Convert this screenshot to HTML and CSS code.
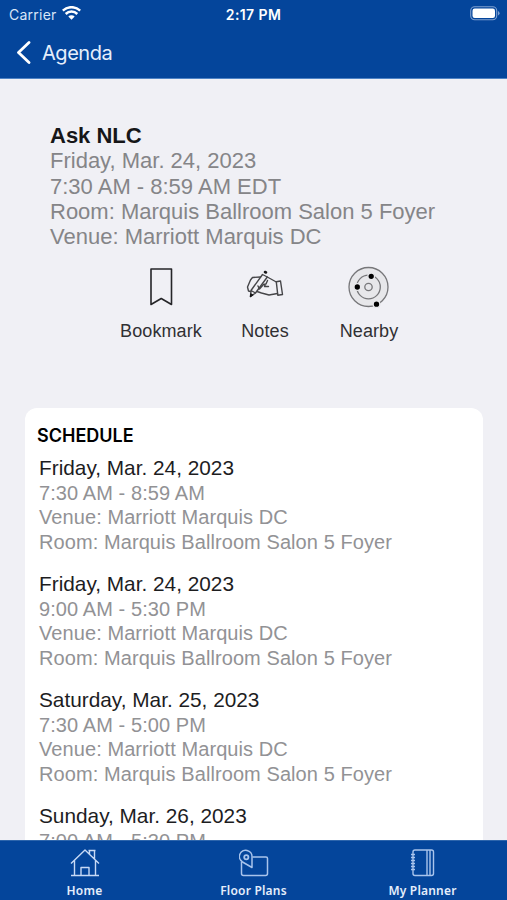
FILE: index.html
```html
<!DOCTYPE html>
<html lang="en">
<head>
<meta charset="utf-8">
<title>Agenda</title>
<link rel="stylesheet" href="styles.css">
</head>
<body>
<div class="app">
  <header class="top">
    <div class="status">
      <div class="carrier"><span>Carrier</span>
        <svg width="19" height="14" viewBox="0 0 19 14" fill="none" stroke="#fff" stroke-width="2.5"><path d="M.8 4.700a12.500 12.500 0 0 1 17.400 0M3.700 8a8.200 8.200 0 0 1 11.600 0"/><path d="M6.300 10.600a4.500 4.500 0 0 1 6.400 0l-3.200 3.200z" fill="#fff" stroke="none"/></svg>
      </div>
      <div class="clock">2:17 PM</div>
      <div class="battery">
        <svg width="31" height="15" viewBox="0 0 31 15"><rect x="1.700" y=".7" width="26" height="13" rx="4" fill="none" stroke="#7fa0d0" stroke-width="1.1"/><rect x="3.500" y="2.500" width="22.500" height="9.500" rx="2.200" fill="#fff"/><path d="M29 5v4.500q1.600-.8 1.600-2.200T29 5z" fill="#7fa0d0"/></svg>
      </div>
    </div>
    <nav class="back">
      <svg width="15" height="24" viewBox="0 0 15 24" fill="none" stroke="#fff" stroke-width="2.800" stroke-linecap="round" stroke-linejoin="round"><path d="M13 1.500 2.500 11.500 13 21.500"/></svg>
      <span>Agenda</span>
    </nav>
  </header>
  <main class="content">
    <section class="event">
      <h1>Ask NLC</h1>
      <p>Friday, Mar. 24, 2023</p>
      <p>7:30 AM - 8:59 AM EDT</p>
      <p>Room: Marquis Ballroom Salon 5 Foyer</p>
      <p>Venue: Marriott Marquis DC</p>
    </section>
    <div class="actions">
      <div class="action">
        <svg width="44" height="44" viewBox="0 0 44 44" fill="none" stroke="#252528" stroke-width="1.600" stroke-linejoin="round"><path d="M12 5h20.500v35.500l-10.250-6-10.250 6z"/></svg>
        <span>Bookmark</span>
      </div>
      <div class="action">
        <svg width="44" height="44" viewBox="0 0 44 44" fill="none" stroke="#454548" stroke-width="1.400" stroke-linejoin="round" stroke-linecap="round"><path d="m19.500 10.500 4.800 2.500L12.500 29l-4.500-2.500zM8 26.500l-.5 6 5-3.500"/><path d="M17.500 13 9.500 13.500 7.500 16l-3 7 1 4 2 .5M24.300 13l9 5M15 22l1.500 3 4-4.500 2.500-.5 1.500-3.500M22.500 20l-1 2.500h4M14 27.500l4.500 1.500 7.500 2 8.500-1.500"/><path d="m33.300 17.800 4.200-.8 2 13.500-4.700.7z"/><path d="m22 8 1 .5" stroke="#171719" stroke-width="2.600"/><path d="m7.500 32.500.4-2.500 1.800 1z" fill="#171719" stroke="#171719"/></svg>
        <span>Notes</span>
      </div>
      <div class="action">
        <svg width="44" height="44" viewBox="0 0 44 44" fill="none" stroke="#77777a" stroke-width="1.300"><circle cx="21.500" cy="23" r="19.500" fill="#e7e7ea"/><circle cx="21.500" cy="23" r="11.800"/><circle cx="21.500" cy="23" r="3.700"/><g fill="#000" stroke="#e7e7ea"><circle cx="24.200" cy="12.300" r="3.300"/><circle cx="10.300" cy="23" r="3.300"/><circle cx="29.500" cy="40.200" r="3.300"/></g></svg>
        <span>Nearby</span>
      </div>
    </div>
    <section class="card">
      <h2>SCHEDULE</h2>
      <div class="slot"><h3>Friday, Mar. 24, 2023</h3><p>7:30 AM - 8:59 AM</p><p>Venue: Marriott Marquis DC</p><p>Room: Marquis Ballroom Salon 5 Foyer</p></div>
      <div class="slot"><h3>Friday, Mar. 24, 2023</h3><p>9:00 AM - 5:30 PM</p><p>Venue: Marriott Marquis DC</p><p>Room: Marquis Ballroom Salon 5 Foyer</p></div>
      <div class="slot"><h3>Saturday, Mar. 25, 2023</h3><p>7:30 AM - 5:00 PM</p><p>Venue: Marriott Marquis DC</p><p>Room: Marquis Ballroom Salon 5 Foyer</p></div>
      <div class="slot"><h3>Sunday, Mar. 26, 2023</h3><p>7:00 AM - 5:30 PM</p></div>
    </section>
  </main>
  <nav class="tabs">
    <div class="tab">
      <svg width="30" height="30" viewBox="0 0 30 30" fill="none" stroke="#c7d9f5" stroke-width="1.400" stroke-linejoin="round"><path d="M1 15.500 15 2l14 13.500M4.500 12.500v15h21v-15M1 27.500h28M11 27.500v-8h8v8M19.500 6V2.500h5v8.500M18.500 2.500h7"/></svg>
      <span>Home</span>
    </div>
    <div class="tab">
      <svg width="30" height="30" viewBox="0 0 30 30" fill="none" stroke="#a9c4ec" stroke-width="1.500" stroke-linejoin="round"><path d="M13.500 9h13.500q1.500 0 1.500 1.500v15q0 2-2 2h-22q-2 0-2-2V14"/><path d="M13 19.500 3.500 14A6.300 6.300 0 1 1 13 9z"/><circle cx="7.300" cy="9.200" r="2.100" stroke-width="1.800"/></svg>
      <span>Floor Plans</span>
    </div>
    <div class="tab">
      <svg width="30" height="30" viewBox="0 0 30 30" fill="none" stroke="#a9c4ec" stroke-width="1.400"><rect x="5" y="2" width="20.500" height="25.500" rx="2"/><path d="M19 2v25.500M22 2v25.500M3 6.500h4M3 9.500h4M3 12.500h4M3 15.500h4M3 18.500h4M3 21.500h4"/></svg>
      <span>My Planner</span>
    </div>
  </nav>
</div>
</body>
</html>
```
FILE: styles.css
```css
* { box-sizing: border-box; }
body, h1, h2, h3, p { margin: 0; }
body { font-family: "Liberation Sans", sans-serif; background: #f0f0f5; }
svg { display: block; flex: none; }
.app { height: 900px; display: flex; flex-direction: column; overflow: hidden; }
.top { height: 79px; flex: none; background: #04459b; color: #fff; border-bottom: 1px solid #4f83c5; font-family: Inter, sans-serif; }
.status { height: 28px; display: grid; grid-template-columns: 1fr auto 1fr; align-items: center; padding: 0 7px 0 9px; }
.carrier { display: flex; align-items: center; gap: 5px; font-size: 14px; letter-spacing: .25px; color: #d9e6f8; }
.carrier svg, .battery svg { margin-bottom: 2px; }
.clock { font-size: 14px; font-weight: 600; letter-spacing: .4px; margin-left: -2px; }
.battery { justify-self: end; }
.back { display: flex; align-items: center; height: 49px; padding-left: 16px; gap: 11px; font-size: 20px; letter-spacing: -.45px; color: #e6effb; }
.content { flex: 1; min-height: 0; overflow: hidden; padding: 44px 24px 0 25px; }
.event { padding-left: 25px; color: #858588; font-size: 22px; line-height: 25.300px; white-space: nowrap; }
.event h1 { font-size: 22px; line-height: 25.300px; color: #161618; }
.actions { display: flex; justify-content: center; height: 92px; margin-top: 15px; padding-left: 22px; }
.action { width: 104px; display: flex; flex-direction: column; align-items: center; gap: 13px; font-size: 18px; letter-spacing: .1px; line-height: 21px; color: #303033; }
.card { margin-top: 52px; height: 520px; background: #fff; border-radius: 12px; padding: 17px 14px 0; white-space: nowrap; }
.card h2 { font: 600 18px/22px Inter, sans-serif; color: #000; margin-left: -2px; }
.slot { height: 116px; padding-top: 9px; font-size: 20px; letter-spacing: .08px; line-height: 24.400px; color: #929295; }
.slot h3 { font-size: 20.800px; letter-spacing: 0; line-height: 24.400px; font-weight: 400; color: #1d1d1f; }
.tabs { height: 60px; flex: none; background: #04459b; border-top: 1px solid #2d65ac; display: grid; grid-template-columns: repeat(3, 1fr); }
.tab { display: flex; flex-direction: column; align-items: center; padding-top: 7px; gap: 5px; color: #e4eefc; font: 600 12px/16px "Noto Sans", sans-serif; letter-spacing: .2px; }
```
